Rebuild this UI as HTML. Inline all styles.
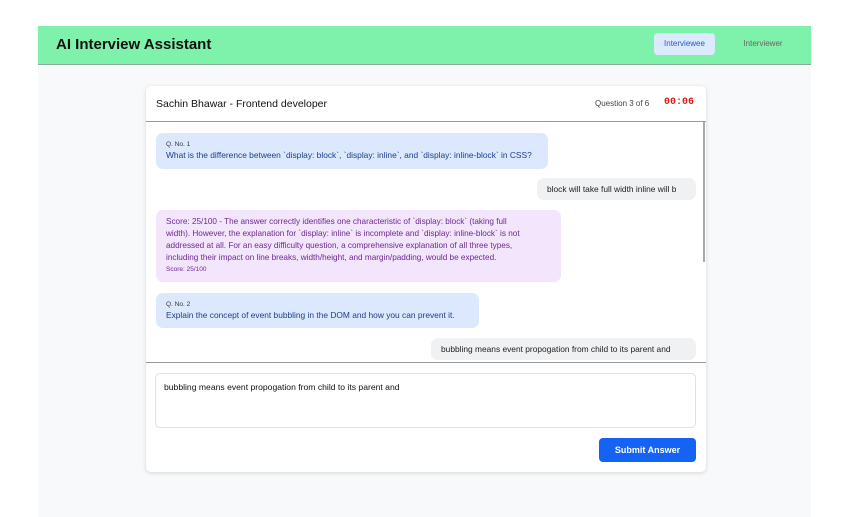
<!DOCTYPE html>
<html><head><style>
*{box-sizing:border-box;margin:0;padding:0}
body{width:851px;height:517px;background:#fff;font-family:"Liberation Sans",sans-serif;position:relative;overflow:hidden}
.abs{position:absolute}
.hdr{left:38px;top:26px;width:773px;height:39px;background:#7ef2aa;border-bottom:1px solid #8aa896}
.main{left:38px;top:65px;width:773px;height:452px;background:#f8f9fa}
.card{left:146px;top:86px;width:560px;height:386px;background:#fff;border-radius:5px;box-shadow:0 1px 4px rgba(0,0,0,.15)}
.b{position:absolute;border-radius:7px;font-size:8.4px;line-height:11.5px;white-space:nowrap}
.q{background:#dbe8fd;color:#1e3f8a;padding:7px 10px}
.q .t{font-size:6.5px;color:#333;line-height:10px}
.a{background:#f0f1f3;color:#222;padding:0 10px;line-height:22px}
.s{background:#f3e5fb;color:#6b2b8e;padding:7px 10px}
</style></head><body>
<div class="abs hdr"><div class="abs" style="left:18px;top:10px;font-size:15px;font-weight:bold;color:#111">AI Interview Assistant</div>
<div class="abs" style="left:616px;top:7px;width:61px;height:22px;background:#dbeafe;border-radius:4px;color:#2a55d4;font-size:8px;line-height:22px;text-align:center">Interviewee</div>
<div class="abs" style="left:690px;top:7px;width:70px;height:22px;color:#666;font-size:8px;line-height:22px;text-align:center">Interviewer</div></div>
<div class="abs main"></div>
<div class="abs card">
<div class="abs" style="left:10px;top:12px;font-size:10.5px;color:#111">Sachin Bhawar - Frontend developer</div>
<div class="abs" style="left:449px;top:13px;font-size:8px;color:#444">Question 3 of 6</div>
<div class="abs" style="left:518px;top:11px;font-size:10px;color:#dc1c1c;font-weight:bold;font-family:'Liberation Mono',monospace">00:06</div>
<div class="abs" style="left:0;top:35px;width:560px;height:1px;background:#999"></div>
<div class="abs" style="left:557px;top:36px;width:2px;height:140px;background:#aaa"></div>
<div class="b q" style="left:10px;top:47px;width:392px;height:36px"><div class="t">Q. No. 1</div>What is the difference between `display: block`, `display: inline`, and `display: inline-block` in CSS?</div>
<div class="b a" style="left:391px;top:92px;width:159px;height:22px">block will take full width inline will b</div>
<div class="b s" style="left:10px;top:124px;width:405px;height:72px;line-height:12px;font-size:8.2px;padding-top:6px">Score: 25/100 - The answer correctly identifies one characteristic of `display: block` (taking full<br>width). However, the explanation for `display: inline` is incomplete and `display: inline-block` is not<br>addressed at all. For an easy difficulty question, a comprehensive explanation of all three types,<br>including their impact on line breaks, width/height, and margin/padding, would be expected.<div style="font-size:6.5px;line-height:11px">Score: 25/100</div></div>
<div class="b q" style="left:10px;top:207px;width:323px;height:35px"><div class="t">Q. No. 2</div>Explain the concept of event bubbling in the DOM and how you can prevent it.</div>
<div class="b a" style="left:285px;top:252px;width:265px;height:22px">bubbling means event propogation from child to its parent and</div>
<div class="abs" style="left:0;top:276px;width:560px;height:1px;background:#999"></div>
<div class="abs" style="left:9px;top:287px;width:541px;height:55px;border:1px solid #dde0e4;border-radius:5px;padding:8px 8px;font-size:8.6px;color:#111">bubbling means event propogation from child to its parent and</div>
<div class="abs" style="left:453px;top:352px;width:97px;height:24px;background:#1463f5;border-radius:4px;color:#fff;font-size:9px;font-weight:bold;line-height:24px;text-align:center">Submit Answer</div>
</div>
</body></html>
